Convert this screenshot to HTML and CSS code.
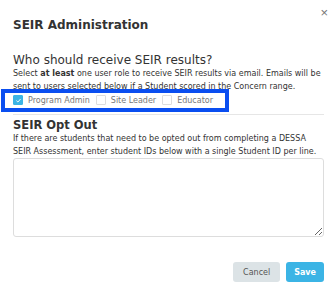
FILE: index.html
```html
<!DOCTYPE html>
<html lang="en">
<head>
    <meta charset="UTF-8">
    <title>SEIR Administration</title>
    <link rel="stylesheet" href="styles.css">
</head>
<body>
    <div class="modal">
        <button class="close-btn" aria-label="Close">&times;</button>
        <h1 class="modal-title">SEIR Administration</h1>

        <div class="section">
            <h2>Who should receive SEIR results?</h2>
            <p class="help">Select <b>at least</b> one user role to receive SEIR results via email. Emails will be sent to users selected below if a Student scored in the Concern range.</p>
            <div class="roles">
                <label class="role"><span class="box checked">
                    <svg viewBox="0 0 10 10" width="7" height="7"><path d="M2 5.2 L4.2 7.2 L8 2.8" fill="none" stroke="#fff" stroke-width="1.3"/></svg>
                </span>Program Admin</label>
                <label class="role"><span class="box"></span>Site Leader</label>
                <label class="role"><span class="box"></span>Educator</label>
                <div class="highlight-box"></div>
            </div>
        </div>

        <div class="section opt-out">
            <h2>SEIR Opt Out</h2>
            <p class="help">If there are students that need to be opted out from completing a DESSA SEIR Assessment, enter student IDs below with a single Student ID per line.</p>
            <textarea class="ids"></textarea>
        </div>

        <div class="actions">
            <button class="btn cancel-btn">Cancel</button>
            <button class="btn save-btn">Save</button>
        </div>
    </div>
</body>
</html>
```

FILE: styles.css
```css
body {
    margin: 0;
    background-color: #fff;
    font-family: 'DejaVu Sans', sans-serif;
    color: #333;
}
.modal {
    position: relative;
    width: 336px;
    height: 286px;
    padding: 18px 12px 0 13px;
    box-sizing: border-box;
}
.close-btn {
    position: absolute;
    top: 5px;
    right: 8px;
    border: none;
    background: none;
    color: #777;
    font-size: 13px;
    padding: 0;
    cursor: pointer;
}
.modal-title {
    margin: 0 0 21px 0;
    font-size: 12px;
    line-height: 14px;
    font-weight: bold;
    color: #333;
}
.section h2 {
    margin: 0;
    font-size: 12px;
    line-height: 14px;
    font-weight: normal;
    color: #333;
}
.help {
    margin: 0;
    font-size: 8px;
    line-height: 13px;
    color: #333;
}
.roles {
    position: relative;
    display: flex;
    align-items: center;
    gap: 6px;
    height: 14px;
    padding-bottom: 7px;
    border-bottom: 1px solid #e6e6e6;
    margin-bottom: 3px;
}
.role {
    display: flex;
    align-items: center;
    gap: 5px;
    font-size: 8px;
    color: #777;
}
.box {
    display: flex;
    align-items: center;
    justify-content: center;
    width: 8px;
    height: 8px;
    border: 1px solid #ddd;
    border-radius: 1px;
    background-color: #fff;
}
.box.checked {
    background-color: #3bb4e5;
    border-color: #3bb4e5;
}
.highlight-box {
    position: absolute;
    left: -12px;
    top: -4px;
    width: 220px;
    height: 15px;
    border: 4px solid #0a4ef0;
}
.opt-out h2 {
    font-size: 11.5px;
    font-weight: bold;
}
.ids {
    display: block;
    width: 100%;
    height: 79px;
    margin-top: 0;
    box-sizing: border-box;
    border: 1px solid #ddd;
    border-radius: 3px;
}
.actions {
    display: flex;
    justify-content: flex-end;
    gap: 6px;
    margin-top: 25px;
}
.btn {
    height: 20px;
    border: none;
    border-radius: 3px;
    font-family: 'DejaVu Sans', sans-serif;
    font-size: 8px;
    padding: 0 8px;
}
.cancel-btn {
    padding: 0 10px;
    background-color: #dce3e6;
    color: #555;
}
.save-btn {
    background-color: #3bb4e5;
    color: #fff;
    font-weight: bold;
}
```
